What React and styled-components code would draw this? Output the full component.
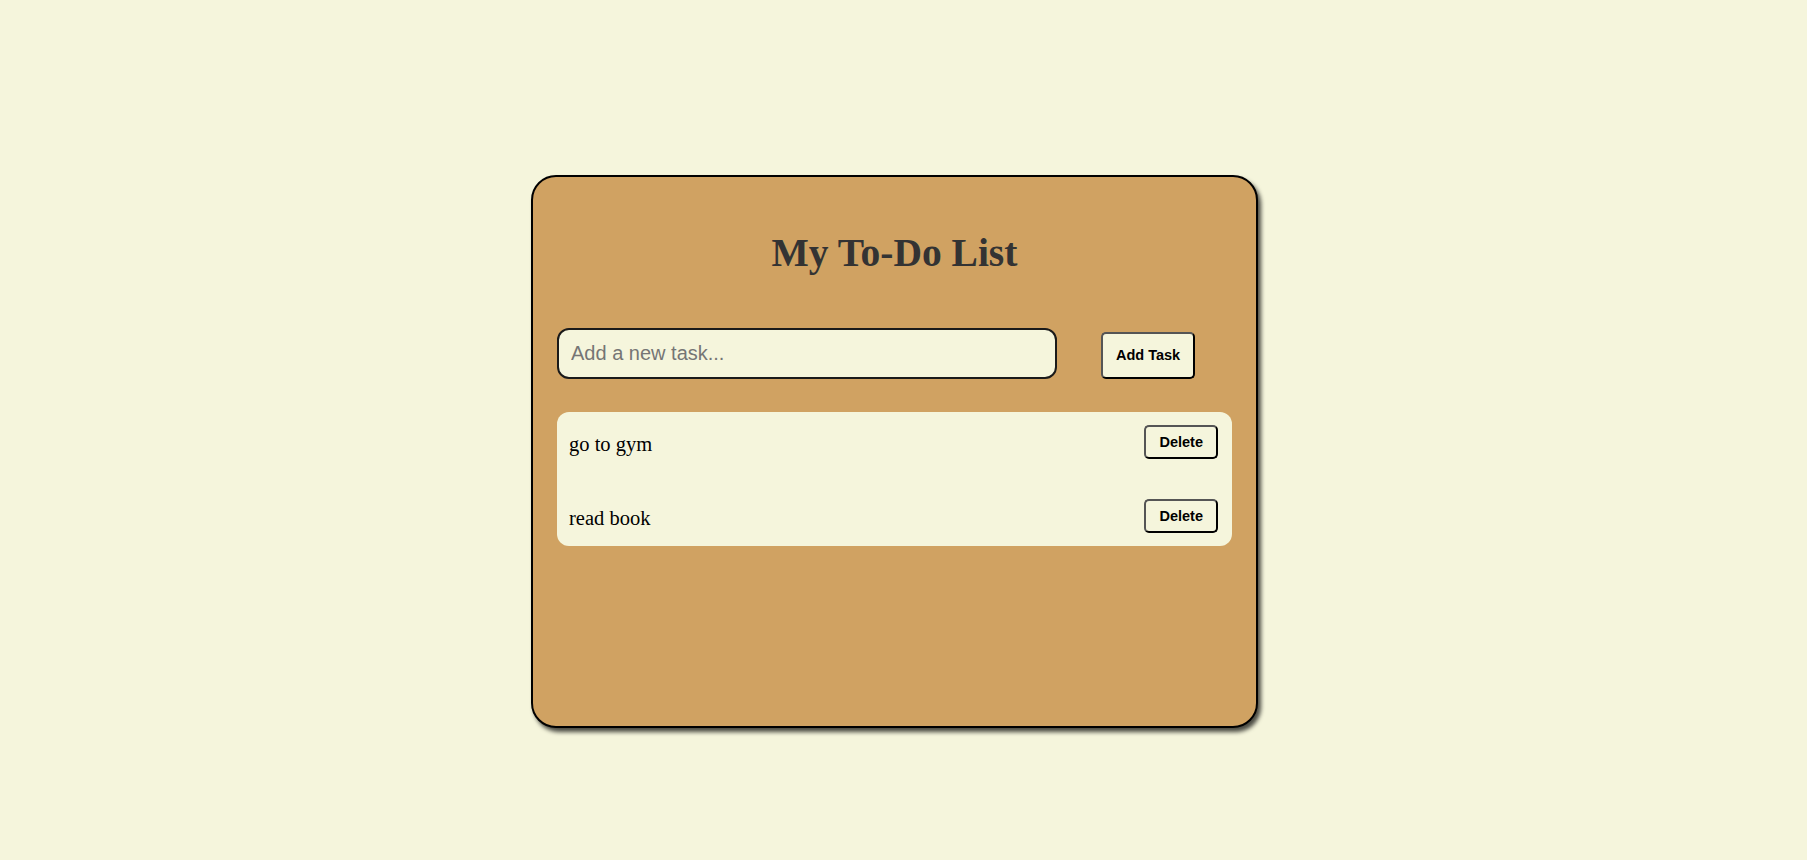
import React, { useState } from "react";
import styled, { createGlobalStyle } from "styled-components";

const GlobalStyle = createGlobalStyle`
  html, body {
    margin: 0;
    padding: 0;
    background: #f5f5dc;
    font-family: "Liberation Serif", "Times New Roman", serif;
  }
  * { box-sizing: border-box; }
`;

const Page = styled.div`
  display: flex;
  justify-content: center;
  align-items: flex-start;
  padding: 175px 18px 0 0;
  min-height: 860px;
`;

const Card = styled.div`
  width: 727px;
  height: 553px;
  background: #d0a262;
  border: 2px solid #000;
  border-radius: 25px;
  box-shadow: 3px 4px 4px rgba(0, 0, 0, 0.7);
  padding: 24px;
  display: flex;
  flex-direction: column;
`;

const Title = styled.h1`
  margin: 29px 0 52px;
  text-align: center;
  font-family: "Liberation Serif", "Times New Roman", serif;
  font-size: 39.5px;
  font-weight: bold;
  line-height: 46px;
  color: #333;
`;

const InputRow = styled.div`
  display: flex;
  align-items: baseline;
  gap: 44px;
  margin-bottom: 33px;
`;

const TaskInput = styled.input`
  width: 500px;
  height: 51px;
  padding: 12px;
  font-family: "Liberation Sans", Arial, sans-serif;
  font-size: 20px;
  line-height: 23px;
  color: #000;
  background: #f5f5dc;
  border: 2px solid #1a1a1a;
  border-radius: 12px;
  outline: none;

  &::placeholder {
    color: #757575;
  }
`;

const Button = styled.button`
  font-family: "Liberation Sans", Arial, sans-serif;
  font-size: 14.5px;
  font-weight: bold;
  line-height: 18px;
  color: #000;
  background: #f5f5dc;
  border: 2px solid;
  border-color: #555 #000 #000 #555;
  border-radius: 5px;
  padding: ${(p) => (p.$large ? "12.5px 13px" : "6px 13px")};
  cursor: pointer;
`;

const List = styled.ul`
  list-style: none;
  margin: 0;
  padding: 0;
  background: #f5f5dc;
  border-radius: 12px;
  display: flex;
  flex-direction: column;
  gap: 13px;
`;

const Item = styled.li`
  display: flex;
  align-items: center;
  justify-content: space-between;
  padding: 13px 14px 13.5px 12px;
`;

const ItemText = styled.span`
  font-family: "Liberation Serif", "Times New Roman", serif;
  font-size: 20.5px;
  line-height: 23px;
  color: #000;
  padding-top: 5px;
`;

export default function App() {
  const [tasks, setTasks] = useState(["go to gym", "read book"]);
  const [value, setValue] = useState("");

  const add = () => {
    if (!value.trim()) return;
    setTasks([...tasks, value.trim()]);
    setValue("");
  };

  return (
    <>
      <GlobalStyle />
      <Page>
        <Card>
          <Title>My To-Do List</Title>
          <InputRow>
            <TaskInput
              placeholder="Add a new task..."
              value={value}
              onChange={(e) => setValue(e.target.value)}
            />
            <Button $large onClick={add}>Add Task</Button>
          </InputRow>
          <List>
            {tasks.map((t, i) => (
              <Item key={i}>
                <ItemText>{t}</ItemText>
                <Button onClick={() => setTasks(tasks.filter((_, j) => j !== i))}>
                  Delete
                </Button>
              </Item>
            ))}
          </List>
        </Card>
      </Page>
    </>
  );
}
